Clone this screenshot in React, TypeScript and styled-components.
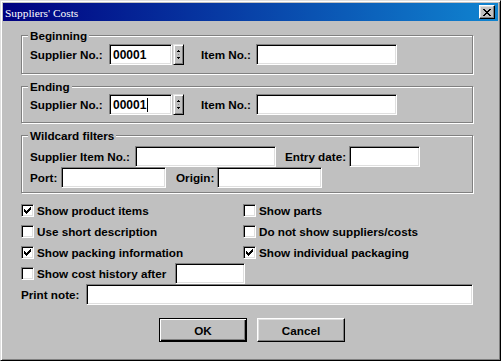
import React from 'react';
import styled, { createGlobalStyle } from 'styled-components';

const GlobalStyle = createGlobalStyle`
  html, body {
    margin: 0;
    padding: 0;
    background: #c0c0c0;
  }
  body {
    font-family: "Liberation Sans", Arial, sans-serif;
  }
`;

const Window = styled.div`
  width: 501px;
  height: 361px;
  box-sizing: border-box;
  background: #c0c0c0;
  border: 1px solid;
  border-color: #dfdfdf #000 #000 #dfdfdf;
  box-shadow: inset 1px 1px #fff, inset -1px -1px #808080;
  padding: 2px;
`;

const TitleBar = styled.div`
  height: 18px;
  display: flex;
  align-items: center;
  justify-content: space-between;
  padding: 0 2px 0 2px;
  background: linear-gradient(to right, #000080, #1084d0);
`;

const TitleText = styled.span`
  color: #fff;
  font-family: "Liberation Serif", "Times New Roman", serif;
  font-size: 11.4px;
  line-height: 18px;
  padding-top: 1px;
`;

const CloseButton = styled.div`
  width: 16px;
  height: 14px;
  box-sizing: border-box;
  background: #c0c0c0;
  border: 1px solid;
  border-color: #fff #000 #000 #fff;
  box-shadow: inset -1px -1px #808080, inset 1px 1px #dfdfdf;
  display: flex;
  align-items: center;
  justify-content: center;
  margin-right: 1px;
`;

const Body = styled.div`
  padding: 14px 25px 0 18px;
  font-size: 11.7px;
  font-weight: bold;
  color: #000;
`;

const GroupBox = styled.div<{ $pb: number; $mb: number }>`
  border: 1px solid #808080;
  box-shadow: inset 1px 1px #fff, 1px 1px #fff;
  padding: 0 0 ${p => p.$pb}px 8px;
  margin-bottom: ${p => p.$mb}px;
`;

const Caption = styled.div`
  width: fit-content;
  height: 14px;
  line-height: 14px;
  margin: -7px 0 0 -2px;
  padding: 0 2px;
  background: #c0c0c0;
`;

const Row = styled.div<{ $mt?: number }>`
  display: flex;
  align-items: center;
  height: 21px;
  margin-top: ${p => p.$mt ?? 0}px;
`;

const Label = styled.span<{ $w?: number; $ml?: number }>`
  flex-shrink: 0;
  white-space: nowrap;
  width: ${p => (p.$w ? `${p.$w}px` : 'auto')};
  margin-left: ${p => p.$ml ?? 0}px;
`;

const Field = styled.div<{ $w: number }>`
  width: ${p => p.$w}px;
  height: 21px;
  flex-shrink: 0;
  box-sizing: border-box;
  background: #fff;
  border: 1px solid;
  border-color: #808080 #fff #fff #808080;
  box-shadow: inset 1px 1px #000, inset -1px -1px #dfdfdf;
  padding-left: 3px;
  display: flex;
  align-items: center;
  font-size: 12px;
`;

const Caret = styled.span`
  width: 1px;
  height: 14px;
  background: #000;
  margin-left: 1px;
`;

const SpinButton = styled.div`
  width: 11px;
  height: 21px;
  flex-shrink: 0;
  box-sizing: border-box;
  margin-left: 1px;
  background: #c0c0c0;
  border: 1px solid;
  border-color: #dfdfdf #000 #000 #dfdfdf;
  box-shadow: inset 1px 1px #fff, inset -1px -1px #808080;
`;

const CheckGrid = styled.div`
  display: grid;
  grid-template-columns: 222px 1fr;
  grid-auto-rows: 21px;
  margin-top: 7px;
`;

const CheckItem = styled.div<{ $span?: boolean }>`
  display: flex;
  align-items: center;
  gap: 3px;
  grid-column: ${p => (p.$span ? '1 / span 2' : 'auto')};
`;

const CheckBox = styled.span`
  width: 13px;
  height: 13px;
  flex-shrink: 0;
  box-sizing: border-box;
  background: #fff;
  border: 1px solid;
  border-color: #808080 #fff #fff #808080;
  box-shadow: inset 1px 1px #000, inset -1px -1px #dfdfdf;
  display: flex;
  align-items: center;
  justify-content: center;
`;

const ButtonRow = styled.div`
  display: flex;
  gap: 10px;
  padding-left: 138px;
  margin-top: 13px;
`;

const PushButton = styled.div<{ $default?: boolean }>`
  width: 88px;
  height: 24px;
  box-sizing: border-box;
  display: flex;
  align-items: center;
  justify-content: center;
  background: #c0c0c0;
  border: 1px solid;
  border-color: ${p => (p.$default ? '#000' : '#fff #000 #000 #fff')};
  box-shadow: ${p =>
    p.$default
      ? 'inset 1px 1px #fff, inset -1px -1px #000, inset -2px -2px #808080'
      : 'inset -1px -1px #808080, inset 1px 1px #dfdfdf'};
`;

const checkPixels: [number, number][] = [
  [6, 0], [5, 1], [6, 1], [0, 2], [4, 2], [5, 2], [6, 2],
  [0, 3], [1, 3], [3, 3], [4, 3], [5, 3], [0, 4], [1, 4], [2, 4], [3, 4], [4, 4],
  [1, 5], [2, 5], [3, 5], [2, 6],
];

const CheckMark = () => (
  <svg width="7" height="7" viewBox="0 0 7 7" shapeRendering="crispEdges">
    {checkPixels.map(([x, y]) => (
      <rect key={`${x}-${y}`} x={x} y={y} width="1" height="1" fill="#000" />
    ))}
  </svg>
);

const SpinArrows = () => (
  <svg width="9" height="19" viewBox="0 0 9 19" shapeRendering="crispEdges">
    <rect x="4" y="5" width="1" height="1" fill="#000" />
    <rect x="3" y="6" width="3" height="1" fill="#000" />
    <rect x="4" y="9" width="1" height="1" fill="#808080" />
    <rect x="3" y="12" width="3" height="1" fill="#000" />
    <rect x="4" y="13" width="1" height="1" fill="#000" />
  </svg>
);

const Check = ({ checked, label }: { checked?: boolean; label: string }) => (
  <CheckItem>
    <CheckBox>{checked && <CheckMark />}</CheckBox>
    <Label>{label}</Label>
  </CheckItem>
);

const App = () => {
  return (
    <>
      <GlobalStyle />
      <Window>
        <TitleBar>
          <TitleText>Suppliers' Costs</TitleText>
          <CloseButton>
            <svg width="8" height="7" viewBox="0 0 8 7" shapeRendering="crispEdges">
              <path d="M0 0h2v1h-2zM6 0h2v1h-2zM1 1h2v1h-2zM5 1h2v1h-2zM2 2h4v1h-4zM3 3h2v1h-2zM2 4h4v1h-4zM1 5h2v1h-2zM5 5h2v1h-2zM0 6h2v1h-2zM6 6h2v1h-2z" fill="#000" />
            </svg>
          </CloseButton>
        </TitleBar>

        <Body>
          <GroupBox $pb={8} $mb={12}>
            <Caption>Beginning</Caption>
            <Row $mt={1}>
              <Label $w={79}>Supplier No.:</Label>
              <Field $w={63}>00001</Field>
              <SpinButton>
                <SpinArrows />
              </SpinButton>
              <Label $w={55} $ml={17}>Item No.:</Label>
              <Field $w={141} />
            </Row>
          </GroupBox>

          <GroupBox $pb={7} $mb={12}>
            <Caption>Ending</Caption>
            <Row>
              <Label $w={79}>Supplier No.:</Label>
              <Field $w={63}>
                00001
                <Caret />
              </Field>
              <SpinButton>
                <SpinArrows />
              </SpinButton>
              <Label $w={55} $ml={17}>Item No.:</Label>
              <Field $w={141} />
            </Row>
          </GroupBox>

          <GroupBox $pb={4} $mb={0}>
            <Caption>Wildcard filters</Caption>
            <Row $mt={3}>
              <Label $w={105}>Supplier Item No.:</Label>
              <Field $w={141} />
              <Label $w={64} $ml={9}>Entry date:</Label>
              <Field $w={71} />
            </Row>
            <Row>
              <Label $w={31}>Port:</Label>
              <Field $w={105} />
              <Label $w={41} $ml={10}>Origin:</Label>
              <Field $w={105} />
            </Row>
          </GroupBox>

          <CheckGrid>
            <Check checked label="Show product items" />
            <Check label="Show parts" />
            <Check label="Use short description" />
            <Check label="Do not show suppliers/costs" />
            <Check checked label="Show packing information" />
            <Check checked label="Show individual packaging" />
            <CheckItem $span>
              <CheckBox />
              <Label $w={135}>Show cost history after</Label>
              <Field $w={70} />
            </CheckItem>
            <CheckItem $span>
              <Label $w={62}>Print note:</Label>
              <Field $w={387} />
            </CheckItem>
          </CheckGrid>

          <ButtonRow>
            <PushButton $default>OK</PushButton>
            <PushButton>Cancel</PushButton>
          </ButtonRow>
        </Body>
      </Window>
    </>
  );
};

export default App;
